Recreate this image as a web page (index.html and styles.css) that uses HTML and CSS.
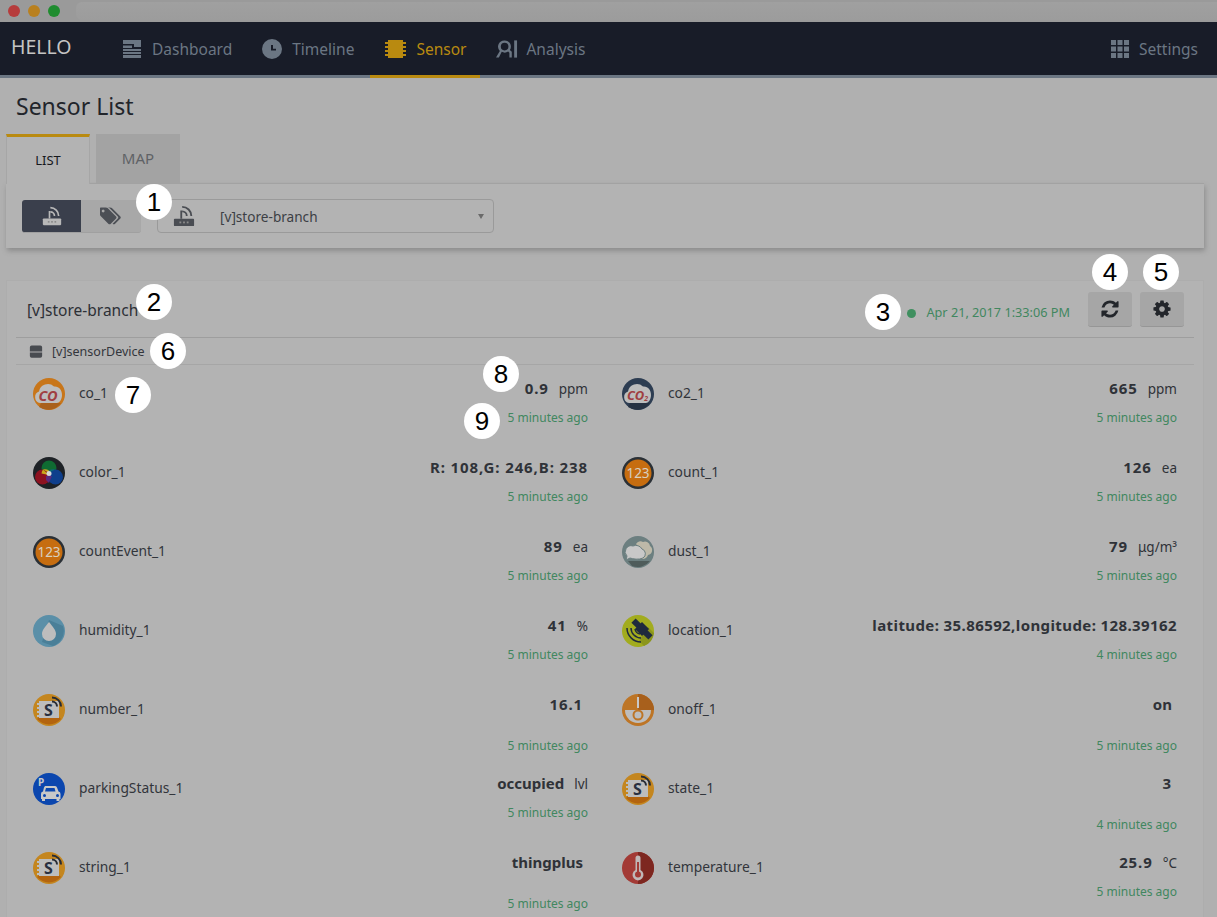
FILE: index.html
```html
<!DOCTYPE html>
<html lang="en">
<head>
    <meta charset="UTF-8">
    <title>Sensor List</title>
    <link rel="stylesheet" href="styles.css">
</head>
<body>
    <svg class="defs" width="0" height="0">
        <symbol id="router" viewBox="0 0 24 24">
            <path d="M2 15h20a1 1 0 0 1 1 1v6a1 1 0 0 1-1 1H2a1 1 0 0 1-1-1v-6a1 1 0 0 1 1-1z"/>
            <rect x="8" y="6" width="2" height="9"/>
            <path d="M10 6a6 6 0 0 1 6 6h-2a4 4 0 0 0-4-4z"/>
            <path d="M10 1a11 11 0 0 1 11 11h-2a9 9 0 0 0-9-9z"/>
            <rect class="hole" x="7" y="18" width="2" height="2"/>
            <rect class="hole" x="11" y="18" width="2" height="2"/>
            <rect class="hole" x="15" y="18" width="2" height="2"/>
        </symbol>
    </svg>

    <div class="titlebar">
        <span class="dot dot-red"></span>
        <span class="dot dot-amber"></span>
        <span class="dot dot-green"></span>
        <span class="titlebar-fill"></span>
    </div>

    <nav class="nav">
        <div class="brand">HELLO</div>
        <a class="nav-item">
            <svg class="nav-icon" viewBox="0 0 20 20"><path d="M1 1h18v7h-7V5H1zM1 6.500h9V9H1zM1 10h18v2H1zM1 13h18v2H1zM1 16h18v3H1z"/></svg>
            Dashboard
        </a>
        <a class="nav-item">
            <svg class="nav-icon" viewBox="0 0 20 20"><path fill-rule="evenodd" d="M10 0a10 10 0 1 1 0 20 10 10 0 0 1 0-20zM9 6v5.500h5v-1.800h-3V6z"/></svg>
            Timeline
        </a>
        <a class="nav-item active">
            <svg class="nav-icon nav-icon-wide" viewBox="0 0 23 20"><path d="M4 1h15v2h3v2h-3v2h3v2h-3v2h3v2h-3v2h3v2h-3v2H4v-2H1v-2h3v-2H1v-2h3V9H1V7h3V5H1V3h3z"/></svg>
            Sensor
        </a>
        <a class="nav-item">
            <svg class="nav-icon nav-icon-analysis" viewBox="0 0 23 20"><path fill-rule="evenodd" d="M9 1a6.500 6.500 0 0 1 5.500 10l2 2v6h-2.500v-5l-1.300-1.300a6.500 6.500 0 0 1-6.700.300L3 19H0l4-7A6.500 6.500 0 0 1 9 1zm0 2.500a4 4 0 1 0 0 8 4 4 0 0 0 0-8z"/><rect x="19" y="1" width="3" height="18"/></svg>
            Analysis
        </a>
        <a class="nav-item nav-right">
            <svg class="nav-icon nav-icon-grid" viewBox="0 0 18 18"><path d="M0 0h5v5H0zM6.500 0h5v5h-5zM13 0h5v5h-5zM0 6.500h5v5H0zM6.500 6.500h5v5h-5zM13 6.500h5v5h-5zM0 13h5v5H0zM6.500 13h5v5h-5zM13 13h5v5h-5z"/></svg>
            Settings
        </a>
    </nav>

    <main class="page">
        <h1 class="page-title">Sensor List</h1>

        <div class="tabs">
            <div class="tab active">LIST</div>
            <div class="tab">MAP</div>
        </div>

        <div class="filter">
            <div class="toggle">
                <button class="toggle-btn on"><svg class="toggle-icon"><use href="#router"/></svg></button>
                <button class="toggle-btn">
                    <svg class="toggle-icon" viewBox="0 0 1920 1792"><path d="M384 448q0-53-37.500-90.500t-90.500-37.500-90.500 37.500-37.500 90.500 37.500 90.500 90.500 37.500 90.500-37.500 37.500-90.500zm1067 576q0 53-37 90l-491 492q-39 37-91 37-53 0-90-37l-715-716q-38-37-64.500-101t-26.500-117v-416q0-52 38-90t90-38h416q53 0 117 26.500t102 64.500l715 714q37 39 37 91zm384 0q0 53-37 90l-491 492q-39 37-91 37-36 0-59-14t-53-45l470-470q37-37 37-90 0-52-37-91l-715-714q-38-38-102-64.500t-117-26.500h224q53 0 117 26.500t102 64.500l715 714q37 39 37 91z"/></svg>
                </button>
            </div>
            <div class="select">
                <svg class="select-icon"><use href="#router"/></svg>
                <span class="select-text">[v]store-branch</span>
                <span class="caret"></span>
            </div>
        </div>

        <section class="panel">
            <header class="panel-head">
                <span class="panel-name">[v]store-branch</span>
                <span class="status-dot"></span>
                <span class="status-date">Apr 21, 2017 1:33:06 PM</span>
                <button class="square-btn">
                    <svg class="btn-icon" viewBox="0 0 1536 1792"><path d="M1511 1056q0 5-1 7-64 268-268 434.500t-478 166.500q-146 0-282.500-55t-243.500-157l-129 129q-19 19-45 19t-45-19-19-45v-448q0-26 19-45t45-19h448q26 0 45 19t19 45-19 45l-137 137q71 66 161 102t187 36q134 0 250-65t186-179q11-17 53-117 8-23 30-23h192q13 0 22.500 9.500t9.500 22.500zm25-800v448q0 26-19 45t-45 19h-448q-26 0-45-19t-19-45 19-45l138-138q-148-137-349-137-134 0-250 65t-186 179q-11 17-53 117-8 23-30 23h-199q-13 0-22.500-9.500t-9.500-22.500v-7q65-268 270-434.500t480-166.500q146 0 284 55.500t245 156.500l130-129q19-19 45-19t45 19 19 45z"/></svg>
                </button>
                <button class="square-btn">
                    <svg class="btn-icon" viewBox="0 0 1536 1792"><path d="M1024 896q0-106-75-181t-181-75-181 75-75 181 75 181 181 75 181-75 75-181zm512-109v222q0 12-8 23t-20 13l-185 28q-19 54-39 91 35 50 107 138 10 12 10 25t-9 23q-27 37-99 108t-94 71q-12 0-26-9l-138-108q-44 23-91 38-16 136-29 186-7 28-36 28h-222q-14 0-24.500-8.500t-11.500-21.500l-28-184q-49-16-90-37l-141 107q-10 9-25 9-14 0-25-11-126-114-165-168-7-10-7-23 0-12 8-23 15-21 51-66.500t54-70.500q-27-50-41-99l-183-27q-13-2-21-12.500t-8-23.500v-222q0-12 8-23t19-13l186-28q14-46 39-92-40-57-107-138-10-12-10-24 0-10 9-23 26-36 98.500-107.500t94.500-71.500q13 0 26 10l138 107q44-23 91-38 16-136 29-186 7-28 36-28h222q14 0 24.500 8.500t11.500 21.500l28 184q49 16 90 37l142-107q9-9 24-9 13 0 25 10 129 119 165 170 7 8 7 22 0 12-8 23-15 21-51 66.500t-54 70.500q26 50 41 98l183 28q13 2 21 12.500t8 23.500z"/></svg>
                </button>
            </header>

            <div class="device">
                <svg class="device-icon" viewBox="0 0 16 14"><path d="M3 0h10a2 2 0 0 1 2 2v5H1V2a2 2 0 0 1 2-2zM1 8h14v4a2 2 0 0 1-2 2H3a2 2 0 0 1-2-2z"/></svg>
                [v]sensorDevice
            </div>

            <div class="sensors">
                <div class="sensor">
                    <svg class="sensor-icon" viewBox="0 0 32 32">
                        <circle cx="16" cy="16" r="16" fill="#c8761a"/>
                        <path d="M8 25h20a16 16 0 0 1-22 4z" fill="#a9611c"/>
                        <path d="M7 25a6 6 0 0 1-1-11.500A9 9 0 0 1 21 8.500C26 8 29 12 29 17S26 25 24 25z" fill="#bdbdbd"/>
                        <text x="15" y="22.500" class="icon-co">CO</text>
                    </svg>
                    <span class="sensor-name">co_1</span>
                    <div class="sensor-data">
                        <div class="value num">0.9<span class="unit">ppm</span></div>
                        <div class="ago">5 minutes ago</div>
                    </div>
                </div>
                <div class="sensor">
                    <svg class="sensor-icon" viewBox="0 0 32 32">
                        <circle cx="16" cy="16" r="16" fill="#2d3d52"/>
                        <path d="M8 25h20a16 16 0 0 1-22 4z" fill="#263243"/>
                        <path d="M7 25a6 6 0 0 1-1-11.500A9 9 0 0 1 21 8.500C26 8 29 12 29 17S26 25 24 25z" fill="#bdbdbd"/>
                        <text x="15.500" y="22" class="icon-co2">CO<tspan class="icon-sub" dy="1">2</tspan></text>
                    </svg>
                    <span class="sensor-name">co2_1</span>
                    <div class="sensor-data">
                        <div class="value num">665<span class="unit">ppm</span></div>
                        <div class="ago">5 minutes ago</div>
                    </div>
                </div>

                <div class="sensor">
                    <svg class="sensor-icon" viewBox="0 0 32 32">
                        <circle cx="16" cy="16" r="16" fill="#1e2226"/>
                        <circle cx="16" cy="11" r="7.500" fill="#0f6b32"/>
                        <circle cx="9.500" cy="20" r="7.500" fill="#8d1220"/>
                        <circle cx="22.500" cy="20" r="7.500" fill="#0f3f8c"/>
                        <path d="M16 16l-6-3.500a7.500 7.500 0 0 1 6 1z" fill="#c9a91c"/>
                        <path d="M10 12.500a7 7 0 0 0-1.500 4L16 18z" fill="#c9a91c"/>
                        <path d="M16 16l6-3.500a7.500 7.500 0 0 0-6 1z" fill="#0d6a75"/>
                        <path d="M13 19h6l-3 7-3-3z" fill="#5a2a80"/>
                        <circle cx="16" cy="16.500" r="2.500" fill="#d8d8d8"/>
                    </svg>
                    <span class="sensor-name">color_1</span>
                    <div class="sensor-data">
                        <div class="value num">R: 108,G: 246,B: 238</div>
                        <div class="ago">5 minutes ago</div>
                    </div>
                </div>
                <div class="sensor">
                    <svg class="sensor-icon" viewBox="0 0 32 32">
                        <circle cx="16" cy="16" r="16" fill="#2a3036"/>
                        <circle cx="16" cy="16" r="13.500" fill="#c66d10"/>
                        <text x="16" y="21" class="icon-num">123</text>
                    </svg>
                    <span class="sensor-name">count_1</span>
                    <div class="sensor-data">
                        <div class="value num">126<span class="unit">ea</span></div>
                        <div class="ago">5 minutes ago</div>
                    </div>
                </div>

                <div class="sensor">
                    <svg class="sensor-icon" viewBox="0 0 32 32">
                        <circle cx="16" cy="16" r="16" fill="#2a3036"/>
                        <circle cx="16" cy="16" r="13.500" fill="#c66d10"/>
                        <text x="16" y="21" class="icon-num">123</text>
                    </svg>
                    <span class="sensor-name">countEvent_1</span>
                    <div class="sensor-data">
                        <div class="value num">89<span class="unit">ea</span></div>
                        <div class="ago">5 minutes ago</div>
                    </div>
                </div>
                <div class="sensor">
                    <svg class="sensor-icon" viewBox="0 0 32 32">
                        <circle cx="16" cy="16" r="16" fill="#6c7f80"/>
                        <path d="M6 25h22a16 16 0 0 1-18 5z" fill="#4f5c5b"/>
                        <path d="M14 8a5 5 0 0 1 7-2 5 5 0 0 1 7 4 5 5 0 0 1-2 9 6 6 0 0 1-6 4c0-6-2-11-6-15z" fill="#bdb9a8"/>
                        <path d="M11 10a7 7 0 0 1 9 3 5 5 0 0 1 1 9c-4 2-10 1-13 0l-4 2 1-4a6 6 0 0 1 6-10z" fill="#c8c8c8" stroke="#6c7f80"/>
                    </svg>
                    <span class="sensor-name">dust_1</span>
                    <div class="sensor-data">
                        <div class="value num">79<span class="unit">μg/m³</span></div>
                        <div class="ago">5 minutes ago</div>
                    </div>
                </div>

                <div class="sensor">
                    <svg class="sensor-icon" viewBox="0 0 32 32">
                        <circle cx="16" cy="16" r="16" fill="#5a8fa8"/>
                        <path d="M16 5l14 6a16 16 0 0 1-10 20l-11-4z" fill="#4a7f98"/>
                        <path d="M16 7c4 5 7 8 7 12a7 7 0 0 1-14 0c0-4 3-7 7-12z" fill="#bdbdbd"/>
                    </svg>
                    <span class="sensor-name">humidity_1</span>
                    <div class="sensor-data">
                        <div class="value num">41<span class="unit">%</span></div>
                        <div class="ago">5 minutes ago</div>
                    </div>
                </div>
                <div class="sensor">
                    <svg class="sensor-icon" viewBox="0 0 32 32">
                        <circle cx="16" cy="16" r="16" fill="#a2ac1e"/>
                        <path d="M17 26l9-14 6 6a16 16 0 0 1-10 13z" fill="#8b951c"/>
                        <g fill="#1f2a3d" transform="rotate(45 20 14)">
                            <rect x="8" y="11" width="8" height="6"/>
                            <rect x="24" y="11" width="8" height="6"/>
                            <rect x="15" y="9" width="10" height="10"/>
                        </g>
                        <path d="M5 13a14 14 0 0 0 14 14M9 13a10 10 0 0 0 10 10M13 14a6 6 0 0 0 5 5" fill="none" stroke="#1f2a3d" stroke-width="1.500"/>
                    </svg>
                    <span class="sensor-name">location_1</span>
                    <div class="sensor-data">
                        <div class="value num-long">latitude: 35.86592,longitude: 128.39162</div>
                        <div class="ago">4 minutes ago</div>
                    </div>
                </div>

                <div class="sensor">
                    <svg class="sensor-icon" viewBox="0 0 32 32">
                        <circle cx="16" cy="16" r="16" fill="#c4861f"/>
                        <path d="M28 25a16 16 0 0 1-24 0l2-2h20z" fill="#b3640f"/>
                        <path d="M6 9V7h20v17H6v-1H4v-2h2v-2H4v-2h2v-2H4v-2h2v-2H4V9z" fill="#bdbdbd"/>
                        <text x="15.500" y="21.500" class="icon-s">S</text>
                        <path d="M19 3.500a9 9 0 0 1 9 9M19 7.500a5 5 0 0 1 5 5" fill="none" stroke="#272c35" stroke-width="2"/>
                    </svg>
                    <span class="sensor-name">number_1</span>
                    <div class="sensor-data">
                        <div class="value bare num">16.1</div>
                        <div class="ago">5 minutes ago</div>
                    </div>
                </div>
                <div class="sensor">
                    <svg class="sensor-icon" viewBox="0 0 32 32">
                        <circle cx="16" cy="16" r="16" fill="#bd7526"/>
                        <path d="M16 0a16 16 0 0 1 16 16H16z" fill="#a8601c"/>
                        <path d="M3 16h26a13 13 0 0 1-26 0z" fill="#bdbdbd"/>
                        <rect x="15" y="3" width="2" height="11" fill="#c8c8c8"/>
                        <circle cx="16" cy="21" r="4.500" fill="#bdbdbd" stroke="#bd7526" stroke-width="2"/>
                    </svg>
                    <span class="sensor-name">onoff_1</span>
                    <div class="sensor-data">
                        <div class="value bare">on</div>
                        <div class="ago">5 minutes ago</div>
                    </div>
                </div>

                <div class="sensor">
                    <svg class="sensor-icon" viewBox="0 0 32 32">
                        <circle cx="16" cy="16" r="16" fill="#0b46ae"/>
                        <text x="5" y="13" class="icon-p">P</text>
                        <path d="M12 13h10a2 2 0 0 1 2 1.500l1.500 4a2.500 2.500 0 0 1 2 2.500v5h-1v2h-3v-2H12v2H9v-2H8v-5a2.500 2.500 0 0 1 2-2.500l1-4z" fill="#c8c8c8"/>
                        <path d="M13 15h8.500l1 3.500H12z" fill="#0b46ae"/>
                        <circle cx="11.500" cy="22.500" r="1.500" fill="#0b46ae"/>
                        <circle cx="24.500" cy="22.500" r="1.500" fill="#0b46ae"/>
                    </svg>
                    <span class="sensor-name">parkingStatus_1</span>
                    <div class="sensor-data">
                        <div class="value">occupied<span class="unit">lvl</span></div>
                        <div class="ago">5 minutes ago</div>
                    </div>
                </div>
                <div class="sensor">
                    <svg class="sensor-icon" viewBox="0 0 32 32">
                        <circle cx="16" cy="16" r="16" fill="#c4861f"/>
                        <path d="M28 25a16 16 0 0 1-24 0l2-2h20z" fill="#b3640f"/>
                        <path d="M6 9V7h20v17H6v-1H4v-2h2v-2H4v-2h2v-2H4v-2h2v-2H4V9z" fill="#bdbdbd"/>
                        <text x="15.500" y="21.500" class="icon-s">S</text>
                        <path d="M19 3.500a9 9 0 0 1 9 9M19 7.500a5 5 0 0 1 5 5" fill="none" stroke="#272c35" stroke-width="2"/>
                    </svg>
                    <span class="sensor-name">state_1</span>
                    <div class="sensor-data">
                        <div class="value bare num">3</div>
                        <div class="ago">4 minutes ago</div>
                    </div>
                </div>

                <div class="sensor">
                    <svg class="sensor-icon" viewBox="0 0 32 32">
                        <circle cx="16" cy="16" r="16" fill="#c4861f"/>
                        <path d="M28 25a16 16 0 0 1-24 0l2-2h20z" fill="#b3640f"/>
                        <path d="M6 9V7h20v17H6v-1H4v-2h2v-2H4v-2h2v-2H4v-2h2v-2H4V9z" fill="#bdbdbd"/>
                        <text x="15.500" y="21.500" class="icon-s">S</text>
                        <path d="M19 3.500a9 9 0 0 1 9 9M19 7.500a5 5 0 0 1 5 5" fill="none" stroke="#272c35" stroke-width="2"/>
                    </svg>
                    <span class="sensor-name">string_1</span>
                    <div class="sensor-data">
                        <div class="value bare">thingplus</div>
                        <div class="ago">5 minutes ago</div>
                    </div>
                </div>
                <div class="sensor">
                    <svg class="sensor-icon" viewBox="0 0 32 32">
                        <circle cx="16" cy="16" r="16" fill="#a33a35"/>
                        <path d="M16 0a16 16 0 0 1 0 32z" fill="#7d2720"/>
                        <path d="M13.500 6a2.500 2.500 0 0 1 5 0v12a5.500 5.500 0 1 1-5 0z" fill="#c0b8b8"/>
                        <rect x="15" y="10" width="2" height="10" fill="#a33a35"/>
                        <circle cx="16" cy="22.500" r="3" fill="#a33a35"/>
                    </svg>
                    <span class="sensor-name">temperature_1</span>
                    <div class="sensor-data">
                        <div class="value num">25.9<span class="unit">°C</span></div>
                        <div class="ago">5 minutes ago</div>
                    </div>
                </div>
            </div>
        </section>
    </main>

    <span class="mark mark-1">1</span>
    <span class="mark mark-2">2</span>
    <span class="mark mark-3">3</span>
    <span class="mark mark-4">4</span>
    <span class="mark mark-5">5</span>
    <span class="mark mark-6">6</span>
    <span class="mark mark-7">7</span>
    <span class="mark mark-8">8</span>
    <span class="mark mark-9">9</span>
</body>
</html>
```

FILE: styles.css
```css
html, body {
    margin: 0;
    height: 917px;
    overflow: hidden;
    background: #b0b0b0;
    color: #2a2d33;
    font-family: "Noto Sans", sans-serif;
}
button {
    font: inherit;
    cursor: pointer;
}
.defs {
    position: absolute;
}

.titlebar {
    height: 22px;
    background: #9a9a9a;
    display: flex;
    align-items: center;
}
.dot {
    width: 12px;
    height: 12px;
    border-radius: 50%;
    margin-left: 8px;
    flex: none;
}
.dot-red { background: #b63c3c; }
.dot-amber { background: #b9801f; }
.dot-green { background: #1f8c2f; }
.titlebar-fill {
    flex: 1;
    height: 18px;
    margin-left: 16px;
    background: linear-gradient(#a0a0a0, #9c9c9c);
    border-radius: 6px 0 0 6px;
}

.nav {
    height: 53px;
    background: #181c28;
    border-bottom: 3px solid #6b7683;
    display: flex;
    color: #6b7683;
    font-size: 15.500px;
}
.brand {
    width: 108px;
    padding-left: 11px;
    box-sizing: border-box;
    color: #c4c4c4;
    font-size: 19.500px;
    line-height: 49px;
}
.nav-item {
    display: flex;
    align-items: center;
    gap: 10px;
    height: 53px;
    padding: 0 14px;
    margin-right: 2px;
    border-bottom: 3px solid transparent;
}
.nav-item.active {
    color: #b98a10;
    border-bottom-color: #b98a10;
}
.nav-icon {
    width: 20px;
    height: 20px;
    fill: currentColor;
}
.nav-icon-wide {
    width: 23px;
    margin-right: -1px;
}
.nav-icon-analysis {
    width: 22px;
    margin-right: -2px;
}
.nav-icon-grid {
    width: 18px;
    height: 18px;
}
.nav-right {
    margin-left: auto;
    margin-right: 0;
    padding-right: 19px;
}

.page {
    padding: 0 13px 0 6px;
}
.page-title {
    margin: 0;
    padding: 15px 0 0 10px;
    height: 41px;
    font-size: 23px;
    line-height: 27px;
    font-weight: 400;
    color: #22252b;
}

.tabs {
    display: flex;
    gap: 6px;
    height: 49px;
    position: relative;
}
.tab {
    width: 84px;
    box-sizing: border-box;
    text-align: center;
    background: #a3a3a3;
    color: #5f6266;
    font-size: 15px;
    line-height: 48px;
}
.tab.active {
    background: #b3b3b3;
    color: #16181c;
    border-top: 3px solid #b98a10;
    border-left: 1px solid #a6a6a6;
    border-right: 1px solid #a6a6a6;
    height: 50px;
    line-height: 47px;
    font-size: 13px;
    z-index: 1;
}

.filter {
    height: 65px;
    box-sizing: border-box;
    border-top: 1px solid #a2a2a2;
    background: #b3b3b3;
    box-shadow: 1px 3px 5px #8c8c8c;
    display: flex;
    align-items: flex-start;
    padding: 15px 0 0 16px;
    gap: 16px;
}
.toggle {
    display: flex;
    margin-top: 1px;
}
.toggle-btn {
    width: 60px;
    height: 33px;
    padding: 0;
    border: 0;
    border-bottom: 1px solid #a0a0a0;
    border-radius: 0 3px 3px 0;
    background: #a8a8a8;
    color: #4c4f55;
    display: flex;
    align-items: center;
    justify-content: center;
}
.toggle-btn.on {
    width: 59px;
    background: #3a3f4c;
    color: #b8b8b8;
    border-radius: 3px 0 0 3px;
}
.toggle-icon {
    width: 22px;
    height: 20px;
    fill: currentColor;
}
.hole {
    fill: #8a8a8a;
}
.select {
    width: 337px;
    height: 34px;
    box-sizing: border-box;
    border: 1px solid #9a9a9a;
    border-radius: 4px;
    display: flex;
    align-items: center;
    padding: 0 9px 0 15px;
}
.select-icon {
    width: 22px;
    height: 22px;
    fill: #4a4d53;
}
.select-text {
    margin-left: 25px;
    font-size: 13.600px;
    color: #3c3f45;
}
.caret {
    margin-left: auto;
    border: 3.500px solid transparent;
    border-top: 5px solid #6a6a6a;
    border-bottom: 0;
}

.panel {
    margin-top: 32px;
    height: 700px;
    padding: 0 9px;
    background: #b3b3b3;
    border: 1px solid #adadad;
    border-bottom: 0;
}
.panel-head {
    height: 57px;
    box-sizing: border-box;
    border-bottom: 1px solid #9e9e9e;
    display: flex;
    align-items: center;
    padding: 5px 10px 0 11px;
}
.panel-name {
    font-size: 15.500px;
    color: #2d3036;
    margin-right: auto;
    margin-top: -4px;
}
.status-dot {
    width: 9px;
    height: 9px;
    border-radius: 50%;
    background: #3f8f5f;
    margin: 4px 10px 0 0;
}
.status-date {
    font-size: 12.700px;
    color: #41875f;
    margin: 1px 18px 0 0;
}
.square-btn {
    width: 44px;
    height: 35px;
    padding: 0;
    margin-left: 8px;
    margin-top: -4px;
    border: 0;
    border-bottom: 1px solid #969696;
    border-radius: 3px;
    background: #a6a6a6;
    display: flex;
    align-items: center;
    justify-content: center;
}
.square-btn:first-of-type {
    margin-left: 0;
}
.btn-icon {
    width: 20px;
    height: 20px;
    fill: #23262b;
}
.device {
    height: 27px;
    box-sizing: border-box;
    border-bottom: 1px solid #a6a6a6;
    display: flex;
    align-items: center;
    gap: 9px;
    padding-left: 13px;
    font-size: 12.500px;
    color: #33363c;
}
.device-icon {
    width: 14px;
    height: 13px;
    fill: #484b50;
}

.sensors {
    display: grid;
    grid-template-columns: 589px 589px;
    grid-auto-rows: 79px;
}
.sensor {
    display: flex;
    align-items: flex-start;
    padding: 0 17px;
}
.sensor-icon {
    width: 32px;
    height: 32px;
    margin-top: 13px;
    flex: none;
}
.sensor-name {
    margin: 18px 0 0 14px;
    font-size: 13.800px;
    line-height: 20px;
    color: #32353b;
}
.sensor-data {
    margin-left: auto;
    text-align: right;
}
.value {
    margin-top: 13px;
    height: 20px;
    font-size: 15px;
    line-height: 20px;
    font-weight: 700;
    color: #2f3238;
}
.value.bare {
    height: 32px;
    padding-right: 5px;
}
.num {
    letter-spacing: 0.900px;
}
.num-long {
    letter-spacing: 0.400px;
}
.unit {
    margin-left: 10px;
    font-size: 13.500px;
    font-weight: 400;
    letter-spacing: 0;
}
.ago {
    margin-top: 10px;
    font-size: 12px;
    line-height: 20px;
    color: #41875f;
}

.icon-num {
    font-size: 13.500px;
    text-anchor: middle;
    fill: #d8d0c0;
}
.icon-s {
    font-size: 16px;
    font-weight: 700;
    text-anchor: middle;
    fill: #2a3040;
}
.icon-co, .icon-co2 {
    font-size: 14.500px;
    font-weight: 700;
    font-style: italic;
    text-anchor: middle;
    fill: #a03f42;
}
.icon-co2 {
    font-size: 13px;
}
.icon-sub {
    font-size: 7px;
}
.icon-p {
    font-size: 10px;
    font-weight: 700;
    fill: #c8c8c8;
}

.mark {
    position: absolute;
    width: 36px;
    height: 36px;
    border-radius: 50%;
    background: #ffffff;
    color: #000000;
    font-family: "Liberation Sans", sans-serif;
    font-size: 26px;
    line-height: 36px;
    text-align: center;
}
.mark-1 { left: 136px; top: 184px; }
.mark-2 { left: 136px; top: 284px; }
.mark-3 { left: 865px; top: 294px; }
.mark-4 { left: 1092px; top: 254px; }
.mark-5 { left: 1143px; top: 254px; }
.mark-6 { left: 150px; top: 333px; }
.mark-7 { left: 115px; top: 377px; }
.mark-8 { left: 483px; top: 356px; }
.mark-9 { left: 464px; top: 403px; }
```
